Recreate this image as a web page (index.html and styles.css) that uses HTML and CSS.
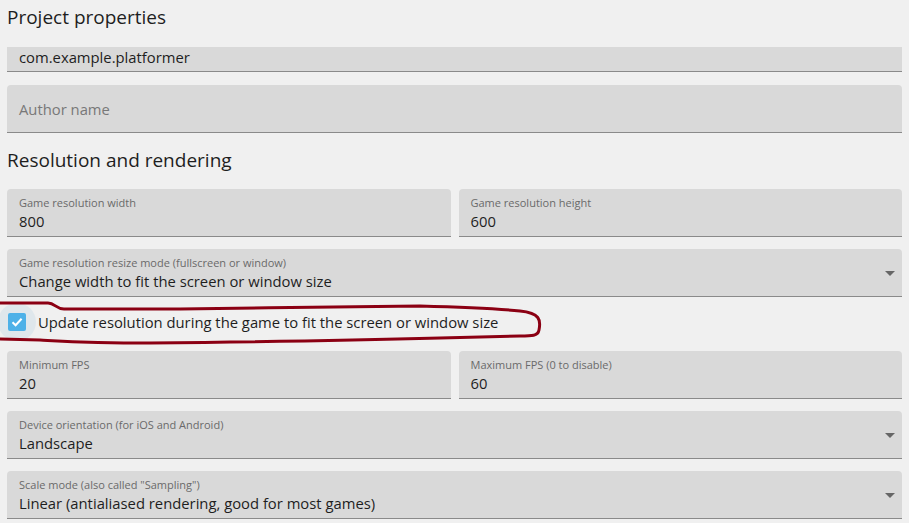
FILE: index.html
```html
<!DOCTYPE html>
<html lang="en">
<head>
  <meta charset="UTF-8">
  <link rel="stylesheet" href="styles.css">
</head>
<body>
  <h2 class="title">Project properties</h2>

  <div class="field short"><span class="value">com.example.platformer</span></div>
  <div class="field plain"><span class="placeholder">Author name</span></div>

  <h2 class="title second">Resolution and rendering</h2>

  <div class="row">
    <div class="field">
      <span class="label">Game resolution width</span>
      <span class="value">800</span>
    </div>
    <div class="field">
      <span class="label">Game resolution height</span>
      <span class="value">600</span>
    </div>
  </div>

  <div class="field select">
    <span class="label">Game resolution resize mode (fullscreen or window)</span>
    <span class="value">Change width to fit the screen or window size</span>
    <span class="arrow"></span>
  </div>

  <div class="check-row">
    <span class="halo">
      <span class="box">
        <svg width="14" height="14" viewBox="0 0 14 14"><path d="M2.5 7.2 L5.6 10.2 L11.6 3.8" fill="none" stroke="#fff" stroke-width="2"/></svg>
      </span>
    </span>
    <span class="check-text">Update resolution during the game to fit the screen or window size</span>
    <!-- hand drawn annotation -->
    <svg class="scribble" width="548" height="50" viewBox="0 0 548 50">
      <path d="M-2 5 L48 5 C55 5 56 11 64 11 L180 11 C260 10 380 8 420 8 C460 9 500 11 520 13 C540 15 541 22 539 32 C538 38 532 38 520 38 L440 40 C330 43 250 44 150 45 C90 45 60 43 40 42 L-2 41" fill="none" stroke="#8b0013" stroke-width="3"/>
    </svg>
  </div>

  <div class="row">
    <div class="field">
      <span class="label">Minimum FPS</span>
      <span class="value">20</span>
    </div>
    <div class="field">
      <span class="label">Maximum FPS (0 to disable)</span>
      <span class="value">60</span>
    </div>
  </div>

  <div class="field select">
    <span class="label">Device orientation (for iOS and Android)</span>
    <span class="value">Landscape</span>
    <span class="arrow"></span>
  </div>

  <div class="field select">
    <span class="label">Scale mode (also called "Sampling")</span>
    <span class="value">Linear (antialiased rendering, good for most games)</span>
    <span class="arrow"></span>
  </div>
</body>
</html>
```

FILE: styles.css
```css
html {
	background-color: #f0f0f0;
}

body {
	margin: 0;
	padding: 0 7px;
	display: flex;
	flex-direction: column;
	font-family: "Open Sans", sans-serif;
	color: #1e1e1e;
}

.title {
	margin: 5px 0 0 0;
	height: 24px;
	line-height: 24px;
	font-size: 19px;
	font-weight: normal;
	color: #1e1e1e;
}

.title.second {
	margin-top: 15px;
	margin-bottom: 17px;
}

.field {
	position: relative;
	box-sizing: border-box;
	height: 48px;
	padding: 7px 12px 0 12px;
	background-color: #d9d9d9;
	border-bottom: 1px solid #8a8a8a;
	border-radius: 4px 4px 0 0;
	display: flex;
	flex-direction: column;
	margin-bottom: 12px;
}

.field.short {
	margin-top: 18px;
	height: 25px;
	padding-top: 0;
	padding-bottom: 4px;
	justify-content: center;
	border-radius: 0;
	margin-bottom: 13px;
}

.field.plain {
	justify-content: center;
	padding-top: 0;
	margin-bottom: 0;
}

.label {
	font-size: 11px;
	line-height: 14px;
	color: #6a6a6a;
}

.value {
	font-size: 14.8px;
	line-height: 22px;
}

.placeholder {
	font-size: 14.8px;
	color: #787878;
}

.row {
	display: flex;
	gap: 8px;
}

.row .field {
	flex: 1;
}

.select {
	padding-right: 30px;
}

.arrow {
	position: absolute;
	right: 7px;
	top: 22px;
	width: 0;
	height: 0;
	border-left: 5px solid transparent;
	border-right: 5px solid transparent;
	border-top: 5px solid #666;
}

.check-row {
	position: relative;
	height: 50px;
	margin-top: -12px;
	margin-bottom: 4px;
	display: flex;
	align-items: center;
}

.halo {
	margin-left: -9px;
	width: 38px;
	height: 38px;
	border-radius: 50%;
	background-color: #dfe7ec;
	display: flex;
	align-items: center;
	justify-content: center;
}

.box {
	width: 18px;
	height: 18px;
	border-radius: 2px;
	background-color: #4db1e8;
	display: flex;
	align-items: center;
	justify-content: center;
}

.check-text {
	margin-left: 2px;
	font-size: 14.8px;
}

.scribble {
	position: absolute;
	left: -7px;
	top: 1px;
}
```
